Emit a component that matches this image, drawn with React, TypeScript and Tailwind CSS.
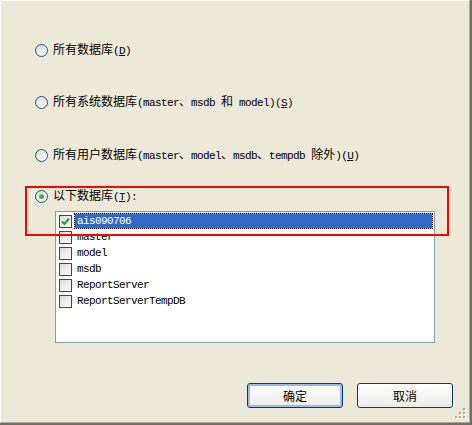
import React from "react";

const cjk = { fontFamily: '"Noto Sans CJK SC", "Liberation Sans", sans-serif' };
const mono = { fontFamily: '"Liberation Mono", "Noto Sans CJK SC", monospace' };

const M = ({ children }: { children: React.ReactNode }) => (
  <span className="text-[11px] tracking-[-0.6px]" style={mono}>
    {children}
  </span>
);

const Radio = ({ checked = false }: { checked?: boolean }) => (
  <span className="flex h-[13px] w-[13px] shrink-0 items-center justify-center rounded-full border border-[#1C5180] bg-gradient-to-br from-[#DCDCD7] to-[#FFFFFF]">
    {checked && (
      <span className="h-[5px] w-[5px] rounded-full bg-gradient-to-br from-[#55D751] to-[#21A121]" />
    )}
  </span>
);

const Check = ({ checked = false }: { checked?: boolean }) => (
  <span className="flex h-[13px] w-[13px] shrink-0 items-center justify-center border border-[#1C5180] bg-gradient-to-br from-[#DCDCD7] to-[#FFFFFF]">
    {checked && (
      <svg width="9" height="9" viewBox="0 0 9 9">
        <path d="M1 4.5 L3.5 7 L8 1.5" fill="none" stroke="#21A121" strokeWidth="2" />
      </svg>
    )}
  </span>
);

const RadioRow = ({ checked, children }: { checked?: boolean; children: React.ReactNode }) => (
  <div className="flex h-[14px] items-center gap-[5px] text-[12px] text-black" style={cjk}>
    <Radio checked={checked} />
    <span className="whitespace-nowrap leading-[14px]">{children}</span>
  </div>
);

const dbs = ["master", "model", "msdb", "ReportServer", "ReportServerTempDB"];

export default function App() {
  return (
    <div className="h-[425px] w-[472px] border-b-2 border-r-2 border-[#716F64]">
      <div className="relative flex h-full w-full flex-col border-b border-l border-r border-t border-b-[#ACA899] border-l-white border-r-[#ACA899] border-t-white bg-[#ECE9D8] pl-[34px] pr-[16px]">
        <div className="mt-[42px]">
          <RadioRow>
            所有数据库<M>(<u>D</u>)</M>
          </RadioRow>
        </div>
        <div className="mt-[38px]">
          <RadioRow>
            所有系统数据库<M>(master</M>、<M>msdb </M>和<M> model)(<u>S</u>)</M>
          </RadioRow>
        </div>
        <div className="mt-[39px]">
          <RadioRow>
            所有用户数据库<M>(master</M>、<M>model</M>、<M>msdb</M>、<M>tempdb </M>除外<M>)(<u>U</u>)</M>
          </RadioRow>
        </div>
        <div className="mt-[27px]">
          <RadioRow checked>
            以下数据库<M>(<u>T</u>):</M>
          </RadioRow>
        </div>

        <div className="ml-[20px] mt-[8px] h-[132px] w-[380px] border border-[#7F9DB9] bg-white pt-[1px]">
          <div className="flex h-[16px] items-center pl-[3px] pr-[1px]">
            <Check checked />
            <div className="ml-[2px] h-[16px] flex-1 border border-dotted border-black bg-[#EAC86A]">
              <div className="flex h-full items-center bg-[#316AC5] pl-[2px] text-[11px] tracking-[-0.6px] text-white" style={mono}>
                ais090706
              </div>
            </div>
          </div>
          {dbs.map((d) => (
            <div key={d} className="flex h-[16px] items-center pl-[3px]">
              <Check />
              <span className="ml-[5px] text-[11px] tracking-[-0.6px] text-black" style={mono}>
                {d}
              </span>
            </div>
          ))}
        </div>

        <div className="mt-[40px] flex justify-end gap-[14px]">
          <button
            className="flex h-[25px] w-[96px] items-center justify-center rounded-[3px] border border-[#003C74] bg-gradient-to-b from-white to-[#ECEBE6] text-[12px] text-black shadow-[inset_0_0_0_2px_#9DB9EB]"
            style={cjk}
          >
            确定
          </button>
          <button
            className="flex h-[25px] w-[96px] items-center justify-center rounded-[3px] border border-[#003C74] bg-gradient-to-b from-white to-[#ECEBE6] text-[12px] text-black"
            style={cjk}
          >
            取消
          </button>
        </div>

        <svg className="absolute bottom-[3px] right-[3px]" width="11" height="11" viewBox="0 0 11 11">
          {[
            [8, 0],
            [4, 4],
            [8, 4],
            [0, 8],
            [4, 8],
            [8, 8],
          ].map(([x, y], i) => (
            <g key={i}>
              <rect x={x + 1} y={y + 1} width="2" height="2" fill="#FFFFFF" />
              <rect x={x} y={y} width="2" height="2" fill="#ACA899" />
            </g>
          ))}
        </svg>

        <div className="absolute left-[24px] top-[185px] h-[50px] w-[424px] border-2 border-[#FF0000]" />
      </div>
    </div>
  );
}
